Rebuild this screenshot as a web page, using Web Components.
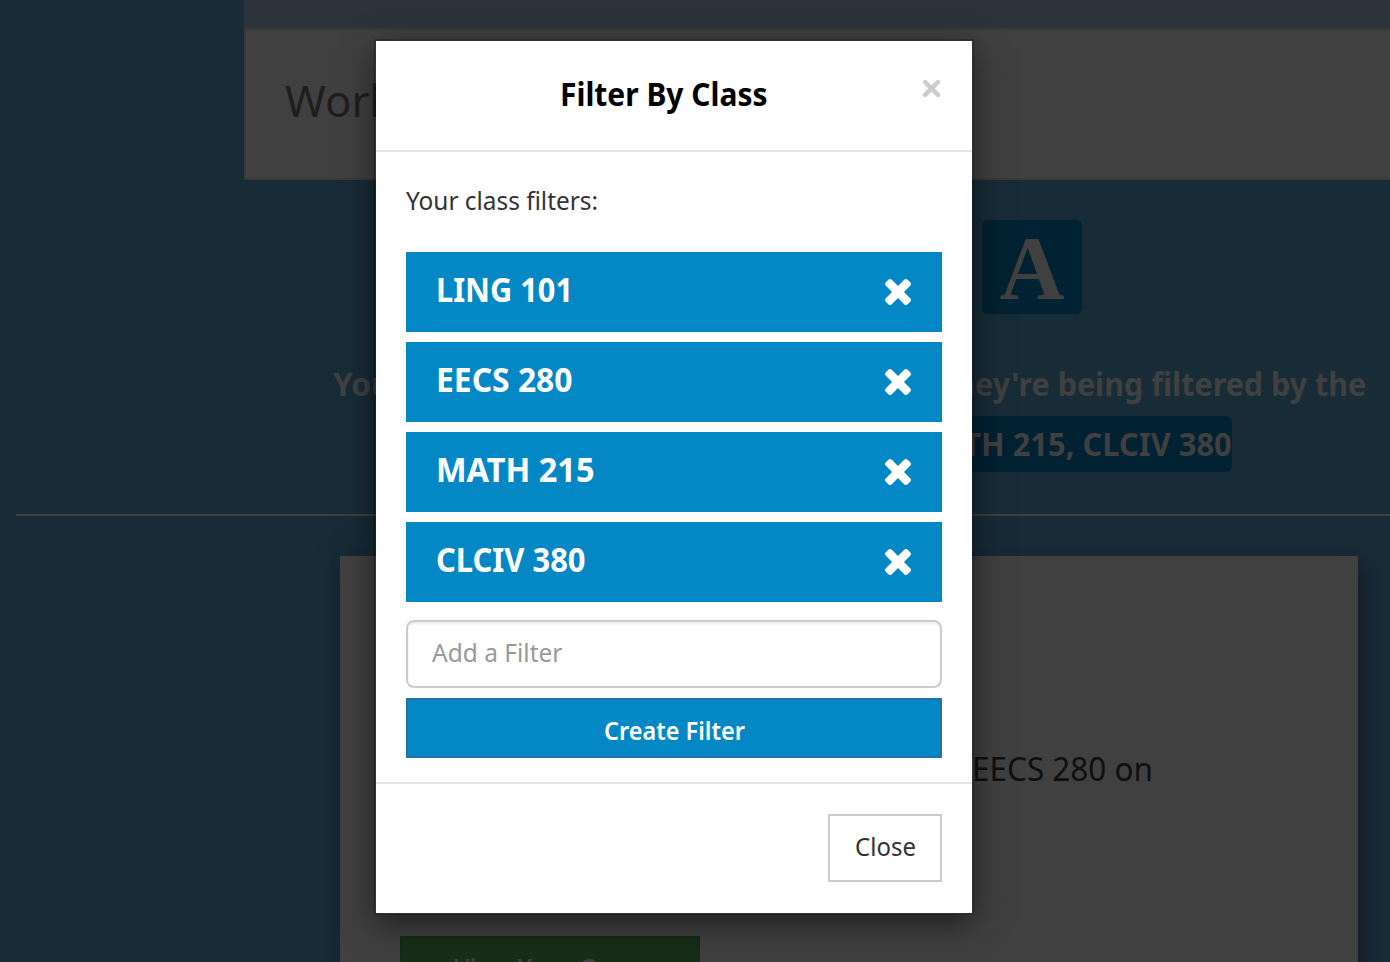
<!DOCTYPE html>
<html lang="en">
<head>
<meta charset="utf-8">
<title>Filter By Class</title>
<style>
body{margin:0;font-family:"Noto Sans","Open Sans",sans-serif;background:#182c37}
</style>
</head>
<body>
<app-shell></app-shell>
<script>
const define=(name,html,setup)=>{
  const t=document.createElement('template');t.innerHTML=html;
  customElements.define(name,class extends HTMLElement{
    connectedCallback(){
      if(this.shadowRoot)return;
      this.attachShadow({mode:'open'}).append(t.content.cloneNode(true));
      if(setup)setup(this,this.shadowRoot);
    }
  });
};

/* One line of text, narrowed to the advance width in "w" or by the factor "sx". */
define('fit-text',`<style>
:host{display:block;white-space:nowrap;flex:none}
span{display:inline-block;transform-origin:0 50%}
</style><span><slot></slot></span>`,(el,root)=>{
  const s=root.querySelector('span');
  const n=s.getBoundingClientRect().width;
  const w=el.hasAttribute('w')?+el.getAttribute('w'):n*(+el.getAttribute('sx')||1);
  s.style.transform='scaleX('+w/n+')';
  el.style.width=w+'px';
});

define('filter-row',`<style>
:host{display:flex;box-sizing:border-box;height:80px;padding:0 31.5px 0 29.5px;background:#0488c5;color:#fff;align-items:center;justify-content:space-between;font-weight:700;font-size:33.5px;line-height:75px}
.n{padding-bottom:5px}
svg{width:26px;height:26px;display:block}
</style><div class="n"><slot></slot></div>
<svg viewBox="110 366 1188 1188"><path fill="#fff" d="M1298 1322q0 40-28 68l-136 136q-28 28-68 28t-68-28l-294-294-294 294q-28 28-68 28t-68-28l-136-136q-28-28-28-68t28-68l294-294-294-294q-28-28-28-68t28-68l136-136q28-28 68-28t68 28l294 294 294-294q28-28 68-28t68 28l136 136q28 28 28 68t-28 68l-294 294 294 294q28 28 28 68z"/></svg>`);

define('modal-dialog',`<style>
:host{display:flex;flex-direction:column;box-sizing:border-box;width:600px;height:875.5px;border:2px solid rgba(0,0,0,.2);background:#fff;background-clip:padding-box;box-shadow:0 10px 30px rgba(0,0,0,.5);color:#333;font-size:25px}
header{height:109px;border-bottom:2px solid #e5e5e5;display:flex;justify-content:space-between;padding:0 31px 0 184px;color:#000;font-weight:700;font-size:33px;line-height:106px;flex:none}
header svg{width:19px;height:19px;margin-top:37.5px}
main{padding:0 30px;height:630px;border-bottom:2px solid #e5e5e5;flex:none}
.t{height:100px;line-height:97px}
.rows{display:grid;gap:10px}
.in{box-sizing:border-box;margin-top:18px;height:68px;border:2px solid #ccc;border-radius:8px;box-shadow:inset 0 2px 2px rgba(0,0,0,.075);color:#999;line-height:61px;padding-left:24px}
.go{box-sizing:border-box;margin-top:10px;height:60px;border:2px solid #286fa9;background:#0488c5;color:#fff;display:flex;justify-content:center;line-height:61px;font-weight:600}
footer{display:flex;justify-content:flex-end;padding:30px}
.close{box-sizing:border-box;width:114px;height:68px;border:2px solid #ccc;line-height:61px;display:flex;justify-content:center}
</style>
<header><fit-text w="207.5">Filter By Class</fit-text>
<svg viewBox="0 0 19 19"><path d="M3.1 3.1 15.9 15.9M15.9 3.1 3.1 15.9" stroke="#ccc" stroke-width="4.6" stroke-linecap="round"/></svg></header>
<main>
<div class="t"><fit-text w="192">Your class filters:</fit-text></div>
<div class="rows">
<filter-row><fit-text w="137">LING 101</fit-text></filter-row>
<filter-row><fit-text w="136.5">EECS 280</fit-text></filter-row>
<filter-row><fit-text w="158.5">MATH 215</fit-text></filter-row>
<filter-row><fit-text w="149.5">CLCIV 380</fit-text></filter-row>
</div>
<div class="in"><fit-text w="130.5">Add a Filter</fit-text></div>
<div class="go"><fit-text w="141">Create Filter</fit-text></div>
</main>
<footer><div class="close"><fit-text w="61">Close</fit-text></div></footer>`);

define('page-banner',`<style>
:host{display:block;margin-left:244px;height:180px;box-sizing:border-box}
.bar{height:28px;background:#2d333d}
.head{box-sizing:border-box;height:152px;background:#404040;border:2px solid #393939;border-right:0;padding-left:39px;font-size:43px;line-height:141px;color:#1e1e1e}
</style><div class="bar"></div><div class="head"><fit-text sx="1.02">Work</fit-text></div>`);

define('filter-notice',`<style>
:host{display:block;box-sizing:border-box;height:336px;padding-top:40px;margin-left:16px;border-bottom:2px solid #404040;color:#404040;font-weight:700;font-size:33px;line-height:60px}
.a{margin-left:966px;width:100px;height:94px;border-radius:6px;background:#002232;display:flex;justify-content:center;font:700 90px/98px "Liberation Serif",serif}
.l1{margin:40px 24px 0 317px;display:flex;justify-content:space-between}
.l2{margin:2px 158px 0 451px;height:56px;line-height:56px;border-radius:6px;background:#002232;display:flex;justify-content:flex-end}
</style>
<div class="a">A</div>
<div class="l1"><fit-text sx=".96">You</fit-text><fit-text sx=".924">they're being filtered by the</fit-text></div>
<div class="l2"><fit-text sx=".935">MATH 215, CLCIV 380</fit-text></div>`);

define('feed-card',`<style>
:host{display:block;box-sizing:border-box;margin:40px 32px 0 340px;height:440px;padding:173px 60px 0;background:#404040;box-shadow:4px 10px 14px -2px rgba(24,24,30,.9),4px 4px 26px rgba(24,36,56,.7);color:#0f0f0f;font-size:33px;line-height:80px}
.m{padding-left:572px}
.b{box-sizing:border-box;width:300px;height:80px;margin-top:127px;background:#182e17;border:2px solid #142b14;padding-left:51.5px;color:#404040;font-weight:600;font-size:28px;line-height:63px}
</style><div class="m"><fit-text w="181">EECS 280 on</fit-text></div>
<div class="b"><fit-text sx=".88">View Your Group</fit-text></div>`);

define('app-shell',`<style>
:host{display:block;position:relative;width:1390px;height:962px;overflow:hidden;background:#182c37}
modal-dialog{position:absolute;left:374px;top:39px}
</style>
<page-banner></page-banner><filter-notice></filter-notice><feed-card></feed-card>
<modal-dialog></modal-dialog>`);
</script>
</body>
</html>
